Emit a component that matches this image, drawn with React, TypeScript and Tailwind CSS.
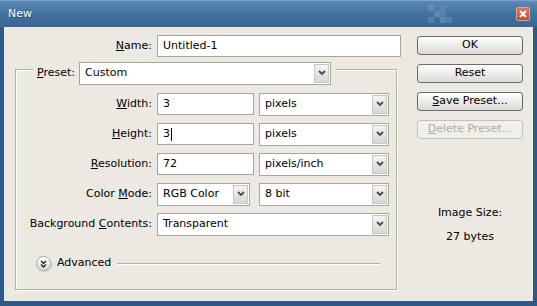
import React from 'react';

function Chevron() {
  return (
    <svg width="8" height="6" viewBox="0 0 8 6">
      <polyline points="1,1 4,4 7,1" fill="none" stroke="#3f4a5c" strokeWidth="1.8" />
    </svg>
  );
}

function TextBox({ value, w, caret }: { value: string; w: string; caret?: boolean }) {
  return (
    <div className={`${w} h-[22px] bg-white border border-[#a7a59f] flex items-center pl-[5px]`}>
      <span>{value}</span>
      {caret && <span className="w-px h-[13px] bg-black ml-px" />}
    </div>
  );
}

function Select({ value, w }: { value: string; w: string }) {
  return (
    <div className={`${w} h-[23px] bg-white border border-[#a7a59f] flex items-center`}>
      <span className="flex-1 pl-[5px]">{value}</span>
      <div className="w-[15px] h-[19px] mr-px border border-[#c9c7c2] bg-gradient-to-b from-[#f4f4f2] to-[#d8d7d3] flex items-center justify-center">
        <Chevron />
      </div>
    </div>
  );
}

function Btn({ children, disabled }: { children: React.ReactNode; disabled?: boolean }) {
  return (
    <div
      className={
        disabled
          ? 'w-[106px] h-[19px] rounded-[3px] border border-[#c4c2bc] bg-[#f1efeb] text-[#aeaca6] flex items-center justify-center'
          : 'w-[106px] h-[19px] rounded-[3px] border border-[#6c6c6c] bg-gradient-to-b from-white to-[#d9d8d4] flex items-center justify-center'
      }
    >
      {children}
    </div>
  );
}

function Label({ children }: { children: React.ReactNode }) {
  return <div className="w-[136px] text-right mr-[5px]">{children}</div>;
}

export default function App() {
  return (
    <div className="w-[537px] h-[306px] bg-[#2e5986] flex flex-col font-['DejaVu_Sans',sans-serif] text-[11px] text-black">
      {/* title bar */}
      <div className="h-[27px] flex items-center bg-gradient-to-b from-[#5c88b6] via-[#4271a0] to-[#3a6694] border-t border-[#7ea3c9]">
        <span className="ml-[8px] text-white [text-shadow:1px_1px_0_#2a4a6e]">New</span>
        <div className="flex-1" />
        <div className="grid grid-cols-4 gap-0 mr-[64px] opacity-60">
          <div className="w-[6px] h-[6px] bg-[#6e97c2]" />
          <div className="w-[6px] h-[6px]" />
          <div className="w-[6px] h-[6px] bg-[#5f8bb8]" />
          <div className="w-[6px] h-[6px]" />
          <div className="w-[6px] h-[6px]" />
          <div className="w-[6px] h-[6px] bg-[#6e97c2]" />
          <div className="w-[6px] h-[6px] bg-[#5f8bb8]" />
          <div className="w-[6px] h-[6px]" />
          <div className="w-[6px] h-[6px] bg-[#5f8bb8]" />
          <div className="w-[6px] h-[6px]" />
          <div className="w-[6px] h-[6px] bg-[#6e97c2]" />
          <div className="w-[6px] h-[6px] bg-[#5f8bb8]" />
        </div>
        <div className="w-[14px] h-[14px] mr-[7px] mb-px rounded-[2px] border border-[#e3a48d] bg-gradient-to-b from-[#d8765a] to-[#b9502f] flex items-center justify-center">
          <svg width="8" height="8" viewBox="0 0 8 8">
            <path d="M1 1 L7 7 M7 1 L1 7" stroke="white" strokeWidth="2" />
          </svg>
        </div>
      </div>

      {/* body */}
      <div className="flex-1 mx-[4px] mb-[5px] bg-[#ece9e3] flex">
        <div className="w-[409px] flex flex-col pt-[8px]">
          <div className="flex items-center h-[22px]">
            <div className="w-[148px] text-right mr-[5px]">
              <u>N</u>ame:
            </div>
            <TextBox value="Untitled-1" w="w-[244px]" />
          </div>

          {/* group box */}
          <div className="mt-[12px] ml-[11px] w-[382px] border border-[#b3b0a9] shadow-[inset_1px_1px_0_#fff,1px_1px_0_#fff] flex flex-col pb-[18px]">
            <div className="-mt-[8px] ml-[17px] self-start flex items-center h-[22px] px-[4px] pr-[5px] bg-[#ece9e3] gap-[4px]">
              <span>
                <u>P</u>reset:
              </span>
              <Select value="Custom" w="w-[252px]" />
            </div>

            <div className="mt-[9px] flex flex-col gap-[8px]">
              <div className="flex items-center h-[22px]">
                <Label>
                  <u>W</u>idth:
                </Label>
                <TextBox value="3" w="w-[97px]" />
                <div className="ml-[5px]">
                  <Select value="pixels" w="w-[130px]" />
                </div>
              </div>
              <div className="flex items-center h-[22px]">
                <Label>
                  <u>H</u>eight:
                </Label>
                <TextBox value="3" w="w-[97px]" caret />
                <div className="ml-[5px]">
                  <Select value="pixels" w="w-[130px]" />
                </div>
              </div>
              <div className="flex items-center h-[22px]">
                <Label>
                  <u>R</u>esolution:
                </Label>
                <TextBox value="72" w="w-[97px]" />
                <div className="ml-[5px]">
                  <Select value="pixels/inch" w="w-[130px]" />
                </div>
              </div>
              <div className="flex items-center h-[22px]">
                <Label>
                  Color <u>M</u>ode:
                </Label>
                <Select value="RGB Color" w="w-[93px]" />
                <div className="ml-[9px]">
                  <Select value="8 bit" w="w-[130px]" />
                </div>
              </div>
              <div className="flex items-center h-[22px]">
                <Label>
                  Background <u>C</u>ontents:
                </Label>
                <Select value="Transparent" w="w-[232px]" />
              </div>
            </div>

            <div className="mt-[21px] h-[15px] flex items-center">
              <div className="ml-[20px] w-[15px] h-[15px] rounded-full border border-[#a9a7a2] bg-gradient-to-b from-white to-[#dcdbd7] shadow-[1px_1px_1px_rgba(0,0,0,0.15)] flex items-center justify-center">
                <svg width="7" height="8" viewBox="0 0 7 8">
                  <polyline points="1,1 3.5,3.5 6,1" fill="none" stroke="#222" strokeWidth="1.4" />
                  <polyline points="1,4.5 3.5,7 6,4.5" fill="none" stroke="#222" strokeWidth="1.4" />
                </svg>
              </div>
              <span className="ml-[6px]">Advanced</span>
              <div className="flex-1 ml-[6px] mr-[16px] h-px bg-[#b3b0a9] shadow-[0_1px_0_#fff]" />
            </div>
          </div>
        </div>

        {/* right column */}
        <div className="flex flex-col pt-[9px] ml-[4px] gap-[9px]">
          <Btn>OK</Btn>
          <Btn>Reset</Btn>
          <Btn>
            <span>
              <u>S</u>ave Preset...
            </span>
          </Btn>
          <Btn disabled>
            <span>
              <u>D</u>elete Preset...
            </span>
          </Btn>
          <div className="mt-[53px] flex flex-col items-center leading-[24px]">
            <span>Image Size:</span>
            <span>27 bytes</span>
          </div>
        </div>
      </div>
    </div>
  );
}
